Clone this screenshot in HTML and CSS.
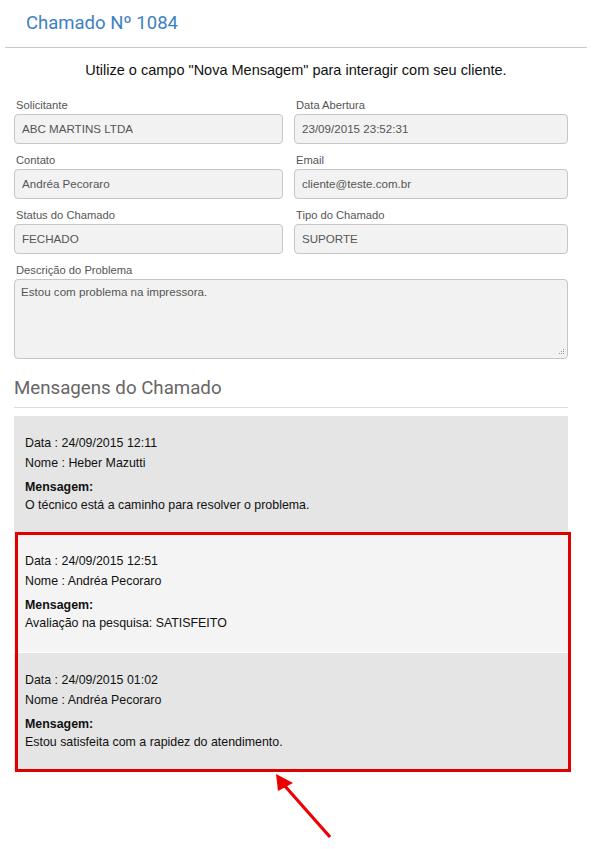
FILE: index.html
```html
<!DOCTYPE html>
<html lang="pt-BR">
<head>
    <meta charset="UTF-8">
    <meta name="viewport" content="width=device-width, initial-scale=1.0">
    <title>Chamado Nº 1084</title>
    <link rel="stylesheet" href="styles.css">
</head>
<body>

    <div id="page">
        <!-- Cabeçalho -->
        <h1 class="page-title">Chamado Nº 1084</h1>
        <hr class="title-rule">

        <p class="intro">Utilize o campo "Nova Mensagem" para interagir com seu cliente.</p>

        <!-- Dados do chamado -->
        <div class="form-grid">
            <div class="field">
                <label>Solicitante</label>
                <div class="input">ABC MARTINS LTDA</div>
            </div>
            <div class="field">
                <label>Data Abertura</label>
                <div class="input">23/09/2015 23:52:31</div>
            </div>
            <div class="field">
                <label>Contato</label>
                <div class="input">Andréa Pecoraro</div>
            </div>
            <div class="field">
                <label>Email</label>
                <div class="input">cliente@teste.com.br</div>
            </div>
            <div class="field">
                <label>Status do Chamado</label>
                <div class="input">FECHADO</div>
            </div>
            <div class="field">
                <label>Tipo do Chamado</label>
                <div class="input">SUPORTE</div>
            </div>
            <div class="field full">
                <label>Descrição do Problema</label>
                <div class="input textarea">Estou com problema na impressora.
                    <svg class="grip" width="7" height="7" viewBox="0 0 7 7">
                        <rect x="5" y="0" width="1" height="1" fill="#999"/>
                        <rect x="3" y="2" width="1" height="1" fill="#999"/>
                        <rect x="5" y="2" width="1" height="1" fill="#999"/>
                        <rect x="1" y="4" width="1" height="1" fill="#999"/>
                        <rect x="3" y="4" width="1" height="1" fill="#999"/>
                        <rect x="5" y="4" width="1" height="1" fill="#999"/>
                    </svg>
                </div>
            </div>
        </div>

        <!-- Mensagens -->
        <h2 class="section-title">Mensagens do Chamado</h2>

        <div class="messages">
            <div class="msg dark">
                <p class="meta">Data : 24/09/2015 12:11</p>
                <p class="meta">Nome : Heber Mazutti</p>
                <p class="msg-label">Mensagem:</p>
                <p class="msg-text">O técnico está a caminho para resolver o problema.</p>
            </div>

            <div class="highlight">
                <div class="msg light">
                    <p class="meta">Data : 24/09/2015 12:51</p>
                    <p class="meta">Nome : Andréa Pecoraro</p>
                    <p class="msg-label">Mensagem:</p>
                    <p class="msg-text">Avaliação na pesquisa: SATISFEITO</p>
                </div>
                <div class="msg dark">
                    <p class="meta">Data : 24/09/2015 01:02</p>
                    <p class="meta">Nome : Andréa Pecoraro</p>
                    <p class="msg-label">Mensagem:</p>
                    <p class="msg-text">Estou satisfeita com a rapidez do atendimento.</p>
                </div>
            </div>

            <svg class="arrow" width="64" height="68" viewBox="0 0 64 68">
                <line x1="14" y1="13" x2="60" y2="65" stroke="#ee0000" stroke-width="3.2"/>
                <polygon points="6,2 8,19 23,11" fill="#ee0000"/>
            </svg>
        </div>
    </div>

</body>
</html>
```

FILE: styles.css
```css
body {
    margin: 0;
    font-family: "Liberation Sans", Arial, sans-serif;
    color: #222;
    background-color: #fff;
}
#page {
    width: 582px;
    margin-left: 5px;
}
/* Cabeçalho */
.page-title {
    margin: 0;
    padding: 11px 0 0 21px;
    height: 36px;
    font-family: Roboto, sans-serif;
    font-weight: 400;
    font-size: 18.5px;
    line-height: 24px;
    color: #3c81c3;
}
.title-rule {
    margin: 0;
    border: none;
    border-top: 1px solid #c8c8c8;
}
.intro {
    margin: 13px 0 0 0;
    text-align: center;
    font-size: 14.5px;
    line-height: 18px;
    color: #111;
}
/* Formulário */
.form-grid {
    display: grid;
    grid-template-columns: 269px 274px;
    column-gap: 11px;
    row-gap: 9px;
    margin: 19px 0 0 9px;
}
.field label {
    display: block;
    margin: 0 0 2px 2px;
    font-size: 11.2px;
    line-height: 14px;
    color: #555;
}
.field.full {
    grid-column: 1 / 3;
}
.input {
    box-sizing: border-box;
    height: 30px;
    padding: 0 7px;
    border: 1px solid #c6c6c6;
    border-radius: 4px;
    background-color: #f2f2f2;
    font-size: 11.6px;
    line-height: 28px;
    color: #555;
}
.input.textarea {
    position: relative;
    height: 80px;
    padding: 4px 6px;
    line-height: 16px;
}
.grip {
    position: absolute;
    right: 2px;
    bottom: 2px;
}
/* Mensagens */
.section-title {
    margin: 18px 0 0 9px;
    width: 554px;
    padding-bottom: 8px;
    border-bottom: 1px solid #dcdcdc;
    font-family: Roboto, sans-serif;
    font-weight: 400;
    font-size: 18.7px;
    line-height: 22px;
    color: #666;
}
.messages {
    margin: 8px 0 0 9px;
    width: 554px;
}
.msg {
    padding: 17px 10px 20px 11px;
    font-size: 12.4px;
    color: #111;
}
.msg.dark {
    background-color: #e5e5e5;
}
.msg.light {
    background-color: #f4f4f4;
    border-bottom: 1px solid #fff;
}
.msg p {
    margin: 0;
}
.meta {
    line-height: 20px;
}
.msg-label {
    margin-top: 5px !important;
    font-weight: bold;
    line-height: 18px;
}
.msg-text {
    line-height: 18px;
}
.highlight {
    position: relative;
}
.highlight::after {
    content: "";
    position: absolute;
    top: -2px;
    left: 1px;
    right: -3px;
    bottom: -1px;
    border: 3px solid #e00000;
    pointer-events: none;
}
.arrow {
    display: block;
    margin: 1px 0 0 256px;
}
```
